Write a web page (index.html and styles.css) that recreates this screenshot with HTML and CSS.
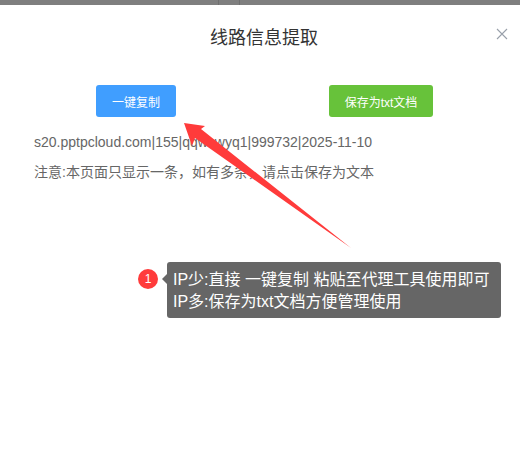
FILE: index.html
```html
<!DOCTYPE html>
<html lang="zh-CN">
<head>
  <meta charset="UTF-8">
  <title>线路信息提取</title>
  <meta name="viewport" content="width=device-width, initial-scale=1.0">
  <link rel="stylesheet" href="styles.css">
</head>
<body>

  <div class="backdrop">
    <i class="seam seam-a"></i>
    <i class="seam seam-b"></i>
  </div>

  <div class="dialog">
    <div class="dialog-header">
      <h2>线路信息提取</h2>
      <svg class="close" viewBox="0 0 12 12" width="12" height="12">
        <path d="M1 1 L11 11 M11 1 L1 11" stroke="#99a0aa" stroke-width="1.1" fill="none"/>
      </svg>
    </div>

    <div class="actions">
      <button class="btn btn-blue">一键复制</button>
      <button class="btn btn-green">保存为txt文档</button>
    </div>

    <p class="line">s20.pptpcloud.com|155|qqwswyq1|999732|2025-11-10</p>
    <p class="note">注意:本页面只显示一条，如有多条，请点击保存为文本</p>
  </div>

  <!-- annotation drawn on top of the screenshot -->
  <svg class="arrow" viewBox="0 0 520 453" width="520" height="453">
    <polygon points="184,123 205,126 201,129 351,248 195,138 192,146" fill="#ff3b3b"/>
  </svg>

  <div class="callout">
    <span class="badge">1</span>
    <div class="tip">
      IP少:直接 一键复制 粘贴至代理工具使用即可<br>
      IP多:保存为txt文档方便管理使用
    </div>
  </div>

</body>
</html>
```

FILE: styles.css
```css
body {
  font-family: "Liberation Sans", "Noto Sans CJK SC", sans-serif;
  background: #fff;
  color: #666;
  margin: 0;
  width: 520px;
  height: 453px;
  overflow: hidden;
  position: relative;
}

.backdrop {
  height: 5px;
  background: #7f7f7f;
  position: relative;
}

.seam {
  position: absolute;
  top: 0;
  width: 1px;
  height: 5px;
  background: #6f6f6f;
}

.seam-a {
  left: 218px;
}

.seam-b {
  left: 239px;
}

.dialog-header {
  position: relative;
  padding: 20px 0 0 8px;
  text-align: center;
}

.dialog-header h2 {
  margin: 0;
  font-size: 18px;
  font-weight: normal;
  line-height: 26px;
  color: #333;
}

.close {
  position: absolute;
  top: 23px;
  right: 12px;
}

.actions {
  display: flex;
  padding: 34px 0 0 96px;
}

.btn {
  height: 32px;
  border: none;
  border-radius: 3px;
  color: #fff;
  font-family: inherit;
  font-size: 12px;
  padding: 0;
}

.btn-blue {
  width: 80px;
  background: #409eff;
}

.btn-green {
  width: 104px;
  margin-left: 153px;
  background: #67c23a;
}

.line, .note {
  margin: 0;
  padding-left: 34px;
  font-size: 14px;
  line-height: 20px;
}

.line {
  margin-top: 15px;
}

.note {
  margin-top: 10px;
}

.arrow {
  position: absolute;
  top: 0;
  left: 0;
}

.callout {
  position: absolute;
  top: 262px;
  left: 138px;
  display: flex;
  align-items: flex-start;
}

.badge {
  width: 20px;
  height: 20px;
  margin-top: 7px;
  border-radius: 50%;
  background: #ff3b3b;
  color: #fff;
  font-size: 12px;
  line-height: 20px;
  text-align: center;
}

.tip {
  position: relative;
  margin-left: 9px;
  width: 334px;
  height: 56px;
  box-sizing: border-box;
  padding: 7px 0 0 6px;
  background: #666;
  border-radius: 3px;
  color: #fff;
  font-size: 16px;
  line-height: 22px;
  white-space: nowrap;
}

.tip::before {
  content: "";
  position: absolute;
  left: -5px;
  top: 12px;
  border-top: 5px solid transparent;
  border-bottom: 5px solid transparent;
  border-right: 5px solid #666;
}
```
